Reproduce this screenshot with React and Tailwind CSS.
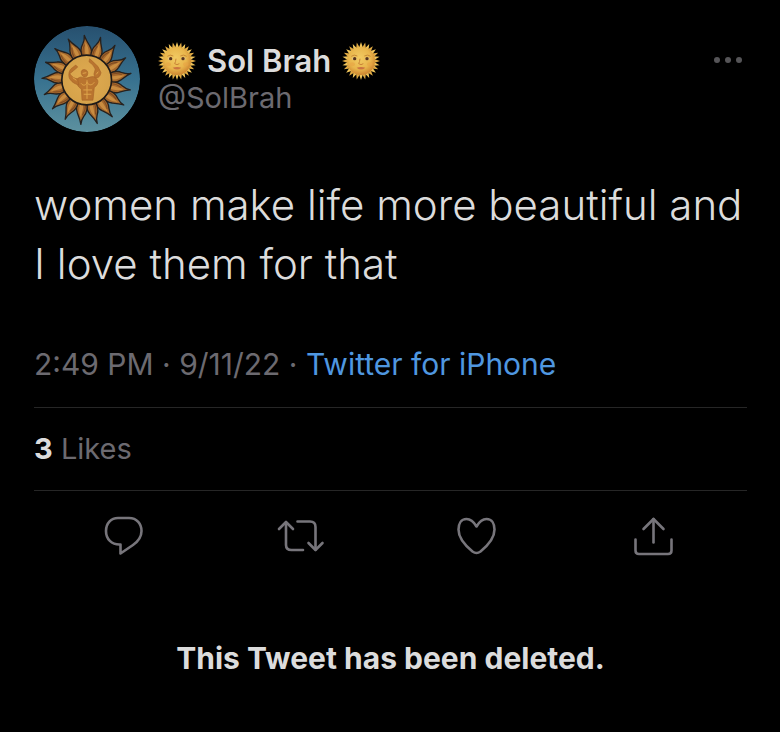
import React, { useState } from "react";

const RAYS = 17;
const SPIKES = 28;

// Profile picture: a flaming sun with a flexing figure in the middle
function Avatar() {
  return (
    <svg viewBox="0 0 320 320" className="w-full h-full" role="img" aria-label="Sol Brah">
      <defs>
        <linearGradient id="sky" x1="0" y1="0" x2="0" y2="1">
          <stop offset="0" stopColor="#27506f" />
          <stop offset="0.5" stopColor="#37718f" />
          <stop offset="1" stopColor="#5d919f" />
        </linearGradient>
        <radialGradient id="disc">
          <stop offset="0" stopColor="#e0ab51" />
          <stop offset="1" stopColor="#d5a24a" />
        </radialGradient>
      </defs>
      <circle cx="160" cy="160" r="160" fill="url(#sky)" />
      {Array.from({ length: RAYS }, (_, i) => (
        <g key={i} transform={`rotate(${(i * 360) / RAYS - 1} 159 163)`}>
          <path
            d="M147 94 C141 78 142 66 149 54 C153 46 155 38 154 28 C159 43 165 52 170 60 C177 72 176 84 172 94 Z"
            fill="#a5682c"
            stroke="#26211e"
            strokeWidth="4"
            strokeLinejoin="round"
          />
          <path d="M157 88 C154 72 157 62 157 48 C163 58 169 70 166 88 Z" fill="#c98c40" />
          <path d="M150 88 C147 74 150 66 154 56" fill="none" stroke="#7e4a22" strokeWidth="3" />
        </g>
      ))}
      <circle cx="159" cy="163" r="75" fill="url(#disc)" stroke="#1f1a18" strokeWidth="5" />
      <g fill="#b9742f" stroke="#a8652a" strokeWidth="2" strokeLinejoin="round">
        <path d="M143 144 C141 134 147 130 154 132 C162 133 164 141 161 149 C157 157 147 156 143 144 Z" />
        <path d="M133 158 C142 150 151 158 158 157 C169 156 177 148 186 157 C198 164 193 178 182 186 L178 224 L145 224 L143 190 C132 184 125 172 133 158 Z" />
        <path d="M132 159 C123 160 114 153 108 144 L119 135 L132 124 L126 118 L112 129 C105 136 103 150 108 160 C116 172 127 176 135 178 Z" />
        <path d="M184 157 C195 158 201 150 202 140 L193 122 L176 106 L168 99 L166 108 L178 118 L185 130 L181 145 Z" />
      </g>
      <g fill="none" stroke="#dfa54c" strokeWidth="3">
        <path d="M160 164 V220" />
        <path d="M142 173 C149 183 158 178 160 170 C166 181 176 179 182 170" />
        <path d="M149 193 H175" />
        <path d="M150 206 H173" />
        <path d="M117 156 L128 164" />
        <path d="M188 146 L194 138" />
        <path d="M147 143 L158 141" />
      </g>
    </svg>
  );
}

function SunFace() {
  return (
    <svg viewBox="0 0 114 114" className="size-[38px] shrink-0" role="img" aria-label="sun with face">
      <defs>
        <radialGradient id="face" cx="0.45" cy="0.4" r="0.6">
          <stop offset="0" stopColor="#f2cb63" />
          <stop offset="0.65" stopColor="#e9b64c" />
          <stop offset="1" stopColor="#cf8732" />
        </radialGradient>
      </defs>
      {Array.from({ length: SPIKES }, (_, i) => (
        <path
          key={i}
          d="M51 18 L57 0 L63 18 Z"
          fill={i % 2 ? "#e0aa43" : "#efc45a"}
          transform={`rotate(${(i * 360) / SPIKES} 57 57)`}
        />
      ))}
      <circle cx="57" cy="57" r="42" fill="url(#face)" />
      <path d="M28 43 Q36 36 46 42" fill="none" stroke="#c98a37" strokeWidth="3" />
      <path d="M67 42 Q77 36 86 43" fill="none" stroke="#c98a37" strokeWidth="3" />
      <ellipse cx="37" cy="50" rx="7" ry="4" fill="#dfc58e" />
      <ellipse cx="76" cy="50" rx="7" ry="4" fill="#dfc58e" />
      <circle cx="38" cy="50" r="5" fill="#5a351b" />
      <circle cx="75" cy="50" r="5" fill="#5a351b" />
      <path d="M54 50 Q53 60 50 65 Q57 71 64 65" fill="none" stroke="#c98437" strokeWidth="3" />
      <path d="M44 77 Q57 73 70 77 Q57 88 44 77 Z" fill="#cb7440" />
      <ellipse cx="31" cy="67" rx="8" ry="6" fill="#e7a344" opacity="0.6" />
      <ellipse cx="83" cy="67" rx="8" ry="6" fill="#e7a344" opacity="0.6" />
    </svg>
  );
}

const actions = [
  {
    label: "Reply",
    paths: ["M18 6 H29 C37 6 41.500 12 41.500 19 C41.500 25.500 38 29.500 33 33 L20.500 41.500 V32.500 C11.500 33 6 27 6 19 C6 11.500 11 6 18 6 Z"],
  },
  {
    label: "Retweet",
    paths: ["M2 17 L9 10 L16 17", "M9 10.500 V33 Q9 38 14.500 38 H26", "M20.500 9.500 H33 Q38.500 9.500 38.500 15 V37.500", "M31.500 31 L38.500 38 L45.500 31"],
  },
  {
    label: "Like",
    paths: ["M23.500 14.500 C20 8.500 16.500 7 13.500 7 C8 7 5.500 12 5.500 17.500 C5.500 27 14 35 19.500 39.500 Q23.500 42.500 27.500 39.500 C33 35 41.500 27 41.500 17.500 C41.500 12 39 7 33.500 7 C30.500 7 27 8.500 23.500 14.500 Z"],
  },
  {
    label: "Share",
    paths: ["M23.500 30.500 V7", "M13.500 17 L23.500 7 L33.500 17", "M5.500 27.500 V38.500 Q5.500 42 9 42 H38 Q41.500 42 41.500 38.500 V27.500"],
  },
];

export default function App() {
  const [active, setActive] = useState(null);

  return (
    <main className="min-h-screen bg-black text-[#dcdcdc] pl-[34px] pr-[33px] pt-[26px] pb-8 font-['Inter','Liberation_Sans',sans-serif]">
      <article>
        <header className="flex items-start">
          <div className="size-[106px] rounded-full overflow-hidden shrink-0">
            <Avatar />
          </div>
          <div className="ml-[18px] pt-4">
            <div className="flex items-center gap-[11px]">
              <SunFace />
              <h1 className="text-[31px] leading-[38px] font-semibold">Sol Brah</h1>
              <SunFace />
            </div>
            <p className="text-[29px] leading-[36px] text-[#6c6a70]">@SolBrah</p>
          </div>
          <button type="button" aria-label="More" className="ml-auto mt-[29px] mr-[5px] flex gap-[5px] py-[2px] cursor-pointer">
            <span className="size-[6px] rounded-full bg-[#565558]" />
            <span className="size-[6px] rounded-full bg-[#565558]" />
            <span className="size-[6px] rounded-full bg-[#565558]" />
          </button>
        </header>

        <p className="mt-[43px] text-[42px] leading-[59px] font-light">
          women make life more beautiful and I love them for that
        </p>

        <p className="mt-[53px] text-[30px] leading-[36px] text-[#6c6a70]">
          2:49 PM · 9/11/22 ·{" "}
          <a href="#source" className="text-[#4f97e0]">Twitter for iPhone</a>
        </p>

        <p className="mt-[25px] py-6 border-y border-[#262626] text-[29px] leading-[34px] text-[#6c6a70]">
          <strong className="font-bold text-[#dcdcdc]">3</strong> Likes
        </p>

        {/* Action bar */}
        <div className="mt-[21px] pl-[66px] pr-[69px] flex justify-between">
          {actions.map((action) => (
            <button
              key={action.label}
              type="button"
              aria-label={action.label}
              aria-pressed={active === action.label}
              onClick={() => setActive(active === action.label ? null : action.label)}
              className="size-12 cursor-pointer"
            >
              <svg
                viewBox="0 0 48 48"
                className="w-full h-full"
                fill="none"
                stroke="#77757b"
                strokeWidth="2.6"
                strokeLinecap="round"
                strokeLinejoin="round"
              >
                {action.paths.map((d) => (
                  <path key={d} d={d} />
                ))}
              </svg>
            </button>
          ))}
        </div>
      </article>

      <p className="mt-[78px] text-center text-[30px] leading-[40px] font-bold">This Tweet has been deleted.</p>
    </main>
  );
}
